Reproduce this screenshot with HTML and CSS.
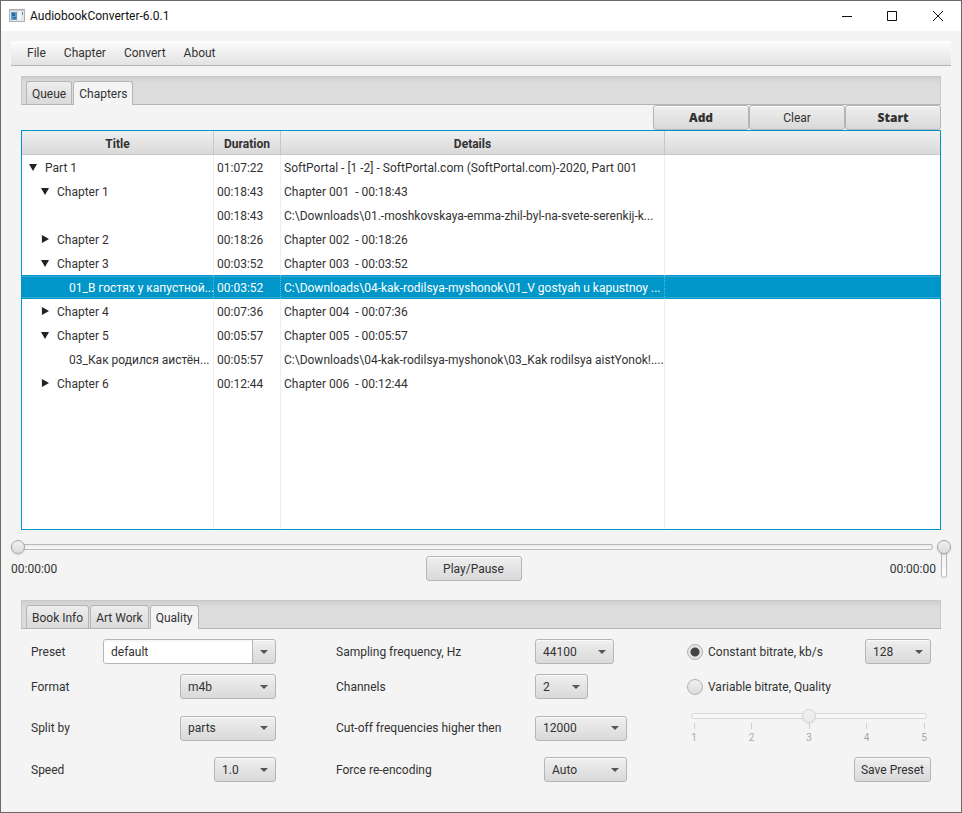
FILE: index.html
```html
<!DOCTYPE html>
<html lang="en">
<head>
  <meta charset="UTF-8">
  <meta name="viewport" content="width=device-width, initial-scale=1">
  <title>AudiobookConverter-6.0.1</title>
  <link rel="stylesheet" href="styles.css">
</head>

<body>
  <div class="window">
    <header class="titlebar">
      <svg class="app-icon" width="16" height="14" viewBox="0 0 16 14">
        <rect x="0.5" y="0.5" width="15" height="12" fill="#e4e9ec" stroke="#b0b0b0"/>
        <rect x="1" y="1" width="14" height="1" fill="#c9c9c9"/>
        <rect x="2" y="3" width="6" height="8" fill="#5d9bc8"/>
        <rect x="3" y="4" width="3" height="3" fill="#2f6796"/>
        <rect x="4" y="8" width="3" height="2" fill="#3a75a5"/>
        <rect x="9" y="3" width="3" height="8" fill="#f7f7f7"/>
        <rect x="13" y="3" width="1" height="3" fill="#5f8fb5"/>
      </svg>
      <h1>AudiobookConverter-6.0.1</h1>
      <div class="window-buttons">
        <button type="button" aria-label="Minimize">
          <svg width="12" height="12" viewBox="0 0 12 12"><path d="M2 6.5h10" stroke="#111" fill="none"/></svg>
        </button>
        <button type="button" aria-label="Maximize">
          <svg width="12" height="12" viewBox="0 0 12 12"><path d="M1.5 1.5h9v9h-9z" stroke="#111" fill="none"/></svg>
        </button>
        <button type="button" aria-label="Close">
          <svg width="12" height="12" viewBox="0 0 12 12"><path d="M1 1l10 10M11 1L1 11" stroke="#111" fill="none"/></svg>
        </button>
      </div>
    </header>

    <main class="content">
      <nav class="menubar">
        <button type="button">File</button>
        <button type="button">Chapter</button>
        <button type="button">Convert</button>
        <button type="button">About</button>
      </nav>

      <section class="pane pane-chapters">
        <div class="tabs" role="tablist">
          <button type="button" class="tab" role="tab">Queue</button>
          <button type="button" class="tab active" role="tab" aria-selected="true">Chapters</button>
        </div>
        <div class="toolbar">
          <button type="button" class="btn strong">Add</button>
          <button type="button" class="btn">Clear</button>
          <button type="button" class="btn strong">Start</button>
        </div>
        <div class="tree">
          <table>
            <colgroup>
              <col class="col-title">
              <col class="col-duration">
              <col class="col-details">
              <col>
            </colgroup>
            <thead>
              <tr><th>Title</th><th>Duration</th><th>Details</th><th></th></tr>
            </thead>
            <tbody>
              <tr>
                <td class="open">Part 1</td>
                <td>01:07:22</td>
                <td>SoftPortal - [1 -2] - SoftPortal.com (SoftPortal.com)-2020, Part 001</td>
                <td></td>
              </tr>
              <tr>
                <td class="open level-1">Chapter 1</td>
                <td>00:18:43</td>
                <td>Chapter 001  - 00:18:43</td>
                <td></td>
              </tr>
              <tr>
                <td class="level-2"></td>
                <td>00:18:43</td>
                <td>C:\Downloads\01.-moshkovskaya-emma-zhil-byl-na-svete-serenkij-k...</td>
                <td></td>
              </tr>
              <tr>
                <td class="closed level-1">Chapter 2</td>
                <td>00:18:26</td>
                <td>Chapter 002  - 00:18:26</td>
                <td></td>
              </tr>
              <tr>
                <td class="open level-1">Chapter 3</td>
                <td>00:03:52</td>
                <td>Chapter 003  - 00:03:52</td>
                <td></td>
              </tr>
              <tr class="selected">
                <td class="level-2">01_В гостях у капустной...</td>
                <td>00:03:52</td>
                <td>C:\Downloads\04-kak-rodilsya-myshonok\01_V gostyah u kapustnoy ...</td>
                <td></td>
              </tr>
              <tr>
                <td class="closed level-1">Chapter 4</td>
                <td>00:07:36</td>
                <td>Chapter 004  - 00:07:36</td>
                <td></td>
              </tr>
              <tr>
                <td class="open level-1">Chapter 5</td>
                <td>00:05:57</td>
                <td>Chapter 005  - 00:05:57</td>
                <td></td>
              </tr>
              <tr>
                <td class="level-2">03_Как родился аистён...</td>
                <td>00:05:57</td>
                <td>C:\Downloads\04-kak-rodilsya-myshonok\03_Kak rodilsya aistYonok!....</td>
                <td></td>
              </tr>
              <tr>
                <td class="closed level-1">Chapter 6</td>
                <td>00:12:44</td>
                <td>Chapter 006  - 00:12:44</td>
                <td></td>
              </tr>
              <tr class="filler"><td></td><td></td><td></td><td></td></tr>
            </tbody>
          </table>
        </div>
      </section>

      <section class="player">
        <input type="range" class="slider seek" min="0" max="100" value="0" aria-label="Position">
        <div class="player-row">
          <span>00:00:00</span>
          <button type="button" class="btn">Play/Pause</button>
          <span class="total">00:00:00</span>
        </div>
        <input type="range" class="slider volume" min="0" max="100" value="100" aria-label="Volume">
      </section>

      <section class="pane">
        <div class="tabs" role="tablist">
          <button type="button" class="tab" role="tab">Book Info</button>
          <button type="button" class="tab" role="tab">Art Work</button>
          <button type="button" class="tab active" role="tab" aria-selected="true">Quality</button>
        </div>
        <form class="quality">
          <div class="fields">
            <label for="preset">Preset</label>
            <div class="combo">
              <input type="text" id="preset" value="default">
              <button type="button" aria-label="Show presets">
                <svg width="8" height="4" viewBox="0 0 8 4"><path d="M0 0h8L4 4z" fill="#555"/></svg>
              </button>
            </div>
            <label for="format">Format</label>
            <select id="format" class="w-96 end"><option>m4b</option></select>
            <label for="split">Split by</label>
            <select id="split" class="w-96 end"><option>parts</option></select>
            <label for="speed">Speed</label>
            <select id="speed" class="w-62 end"><option>1.0</option></select>
          </div>

          <div class="fields fields-middle">
            <label for="frequency">Sampling frequency, Hz</label>
            <select id="frequency" class="w-79"><option>44100</option></select>
            <label for="channels">Channels</label>
            <select id="channels" class="w-53"><option>2</option></select>
            <label for="cutoff">Cut-off frequencies higher then</label>
            <select id="cutoff" class="w-92"><option>12000</option></select>
            <label for="force">Force re-encoding</label>
            <select id="force" class="w-83 end"><option>Auto</option></select>
          </div>

          <div class="fields">
            <label class="radio"><input type="radio" name="bitrate" checked>Constant bitrate, kb/s</label>
            <select class="w-66 end" aria-label="Bitrate"><option>128</option></select>
            <label class="radio wide"><input type="radio" name="bitrate">Variable bitrate, Quality</label>
            <div class="vbr wide">
              <span class="vbr-track"></span>
              <input type="range" class="slider" min="1" max="5" value="3" disabled aria-label="Variable bitrate quality">
              <div class="ticks"><span>1</span><span>2</span><span>3</span><span>4</span><span>5</span></div>
            </div>
            <button type="button" class="btn save wide end">Save Preset</button>
          </div>
        </form>
      </section>
    </main>
  </div>
</body>
</html>
```
FILE: styles.css
```css
* {
  box-sizing: border-box;
  margin: 0;
  padding: 0;
}

body,
button,
input,
select {
  font-family: Roboto, 'Open Sans', sans-serif;
  font-size: 12px;
  line-height: 16px;
  color: #323232;
}

.window {
  display: flex;
  flex-direction: column;
  min-height: 100vh;
  border: 1px solid #6a6a6c;
  background: #f4f4f4;
}

/* title bar */
.titlebar {
  display: flex;
  align-items: center;
  height: 30px;
  padding-left: 8px;
  background: #fff;
}

.titlebar h1 {
  flex: 1;
  margin-left: 5px;
  font-size: 12px;
  font-weight: 400;
  color: #111;
}

.window-buttons {
  display: flex;
}

.window-buttons button {
  display: flex;
  align-items: center;
  justify-content: center;
  width: 46px;
  height: 30px;
  border: none;
  background: none;
}

.content {
  flex: 1;
  display: flex;
  flex-direction: column;
  padding: 10px 10px 30px;
}

/* menu */
.menubar {
  display: flex;
  height: 25px;
  padding: 0 7px;
  border-bottom: 1px solid #b4b4b4;
  background: linear-gradient(#fdfdfd, #e2e2e2);
}

.menubar button {
  padding: 0 9px;
  border: none;
  background: none;
}

/* tab panes */
.pane {
  margin: 0 10px;
}

.pane-chapters {
  flex: 1;
  display: flex;
  flex-direction: column;
  margin-top: 10px;
}

.tabs {
  display: flex;
  align-items: flex-end;
  gap: 1px;
  height: 29px;
  padding-left: 4px;
  border: 1px solid #c8c8c8;
  border-bottom-color: #b5b5b5;
  background: linear-gradient(#cfcfcf, #dcdcdc 6px);
}

.tab {
  height: 23px;
  padding: 2px 5px 0;
  border: 1px solid #b5b5b5;
  border-bottom: none;
  border-radius: 3px 3px 0 0;
  background: linear-gradient(#ededed, #dadada);
}

.tab.active {
  height: 24px;
  margin-bottom: -1px;
  padding-top: 0;
  background: #f4f4f4;
}

/* buttons */
.btn,
select,
.combo {
  height: 25px;
  border: 1px solid #b5b5b5;
  border-radius: 3px;
  background: linear-gradient(#efefef, #d9d9d9);
  box-shadow: inset 0 1px 0 #fbfbfb;
}

.toolbar {
  display: flex;
  justify-content: flex-end;
}

.toolbar .btn {
  width: 96px;
}

.strong {
  font-family: 'Open Sans', sans-serif;
  font-weight: 800;
}

/* chapters tree */
.tree {
  flex: 1;
  display: grid;
  border: 1px solid #0096c9;
  background: #fff;
}

table {
  width: 100%;
  table-layout: fixed;
  border-collapse: separate;
  border-spacing: 0;
}

.col-title {
  width: 192px;
}

.col-duration {
  width: 67px;
}

.col-details {
  width: 384px;
}

th,
td {
  height: 24px;
  padding-top: 2px;
  border-right: 1px solid #ededed;
  white-space: pre;
}

th:last-child,
td:last-child {
  border-right: none;
}

th {
  border-right-color: #c8c8c8;
  border-bottom: 1px solid #c8c8c8;
  background: linear-gradient(#efefef, #d9d9d9);
  font-weight: 700;
}

td {
  padding-left: 3px;
  text-align: left;
}

td:first-child {
  padding-left: 7px;
}

td.level-1:first-child {
  padding-left: 19px;
}

td.level-2:first-child {
  padding-left: 47px;
}

td.open::before,
td.closed::before {
  content: "";
  display: inline-block;
  width: 8px;
  height: 7px;
  margin-right: 8px;
  vertical-align: 1px;
  background: #222;
  clip-path: polygon(0 0, 100% 0, 50% 100%);
}

td.closed::before {
  height: 8px;
  clip-path: polygon(12% 0, 100% 50%, 12% 100%);
}

.selected td {
  border-right: 1px dotted #5fbfe0;
  background: #0096c9;
  box-shadow: inset 0 1px 0 #0096c9, inset 0 2px 0 #2fabd6, inset 0 -1px 0 #0096c9, inset 0 -2px 0 #2fabd6;
  color: #fff;
}

.selected td:last-child {
  border-right: none;
}

.filler td {
  height: auto;
}

/* sliders */
.slider {
  appearance: none;
  background: none;
}

.slider::-webkit-slider-runnable-track {
  height: 6px;
  border-radius: 3px;
  background: linear-gradient(#e8e8e8, #fff);
  box-shadow: inset 0 0 0 1px #b8b8b8;
}

.slider::-webkit-slider-thumb {
  appearance: none;
  width: 14px;
  height: 14px;
  margin-top: -4px;
  border: 1px solid #a8a8a8;
  border-radius: 50%;
  background: linear-gradient(#f0f0f0, #dcdcdc);
  box-shadow: 0 1px 2px rgba(0, 0, 0, 0.15);
}

/* player */
.player {
  display: grid;
  grid-template-columns: 1fr 14px;
  column-gap: 4px;
  row-gap: 2px;
  margin: 10px 0 19px;
}

.seek {
  height: 14px;
}

.player-row {
  display: grid;
  grid-template-columns: 1fr 96px 1fr;
  align-items: center;
  margin-right: -3px;
}

.total {
  text-align: right;
}

.volume {
  grid-column: 2;
  grid-row: 1 / 3;
  writing-mode: vertical-lr;
  direction: rtl;
  width: 14px;
  height: 38px;
}

.volume::-webkit-slider-runnable-track {
  width: 6px;
  height: 100%;
}

.volume::-webkit-slider-thumb {
  margin: 0 0 0 -4px;
}

/* quality form */
.quality {
  display: grid;
  grid-template-columns: 245fr 291fr 244fr;
  column-gap: 60px;
  padding: 10px 10px 0;
}

.fields {
  display: grid;
  grid-template-columns: auto auto;
  grid-template-rows: 25px 25px 38px 25px;
  gap: 10px 0;
  align-items: center;
  align-content: start;
}

.fields-middle {
  grid-template-columns: 1fr 92px;
}

.end {
  justify-self: end;
}

.wide {
  grid-column: 1 / -1;
}

select {
  appearance: none;
  padding-left: 7px;
  background:
    url("data:image/svg+xml,%3Csvg xmlns='http://www.w3.org/2000/svg' width='8' height='4'%3E%3Cpath d='M0 0h8L4 4z' fill='%23555'/%3E%3C/svg%3E") no-repeat right 7px center,
    linear-gradient(#efefef, #d9d9d9);
}

.w-53 { width: 53px; }
.w-62 { width: 62px; }
.w-66 { width: 66px; }
.w-79 { width: 79px; }
.w-83 { width: 83px; }
.w-92 { width: 92px; }
.w-96 { width: 96px; }

.combo {
  display: flex;
  justify-self: end;
  width: 173px;
  overflow: hidden;
}

.combo input {
  flex: 1;
  min-width: 0;
  padding-left: 7px;
  border: none;
  background: linear-gradient(#f4f4f4, #fff 3px);
}

.combo button {
  display: flex;
  align-items: center;
  justify-content: center;
  width: 23px;
  border: none;
  border-left: 1px solid #b5b5b5;
  background: none;
}

.radio {
  display: flex;
  align-items: center;
  gap: 5px;
}

.radio input {
  appearance: none;
  width: 16px;
  height: 16px;
  border: 1px solid #b0b0b0;
  border-radius: 50%;
  background: linear-gradient(#f0f0f0, #dcdcdc);
}

.radio input:checked {
  background: radial-gradient(circle, #444 4px, #e6e6e6 5px);
}

.save {
  padding: 0 6px;
}

.vbr {
  display: grid;
  grid-template-rows: 14px 24px;
  opacity: 0.4;
}

.vbr-track {
  grid-area: 1 / 1;
  align-self: center;
  height: 6px;
  margin: 0 4px;
  border: 1px solid #b0b0b0;
  border-radius: 3px;
  background: #fff;
}

.vbr .slider {
  grid-area: 1 / 1;
  height: 14px;
}

.vbr .slider::-webkit-slider-runnable-track {
  background: none;
  box-shadow: none;
}

.ticks {
  display: flex;
  justify-content: space-between;
  padding: 0 2px;
}

.ticks span {
  width: 10px;
  font-size: 10px;
  line-height: 12px;
  text-align: center;
}

.ticks span::before {
  content: "";
  display: block;
  width: 1px;
  height: 6px;
  margin: 0 auto 3px;
  background: #999;
}
```
